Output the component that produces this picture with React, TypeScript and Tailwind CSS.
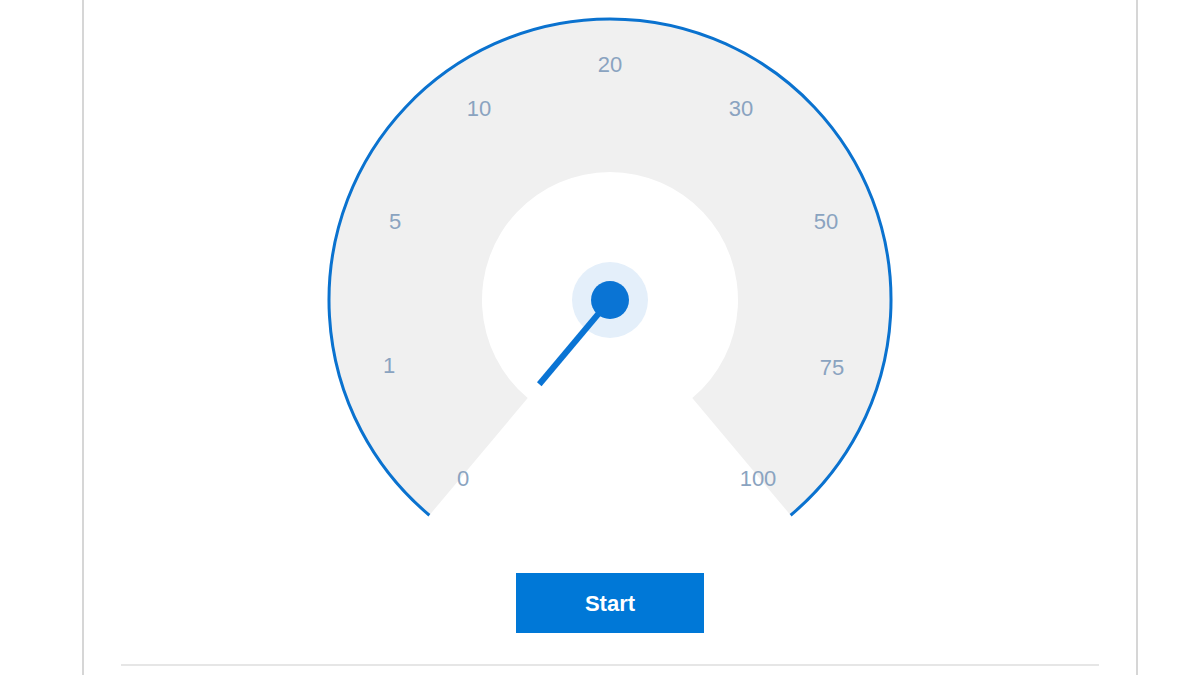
const CX = 290;
const CY = 300;
const R_OUT = 281;
const R_IN = 128;

// label centres measured on the dial (svg coords)
const LABELS: Array<{ t: string; x: number; y: number }> = [
  { t: '0', x: 143, y: 478 },
  { t: '1', x: 69, y: 365 },
  { t: '5', x: 75, y: 221 },
  { t: '10', x: 159, y: 108 },
  { t: '20', x: 290, y: 64 },
  { t: '30', x: 421, y: 108 },
  { t: '50', x: 506, y: 221 },
  { t: '75', x: 512, y: 367 },
  { t: '100', x: 438, y: 478 },
];

const pt = (deg: number, r: number) => {
  const a = (deg * Math.PI) / 180;
  return { x: CX + r * Math.sin(a), y: CY - r * Math.cos(a) };
};

const Gauge = () => {
  const o1 = pt(-140, R_OUT);
  const o2 = pt(140, R_OUT);
  const i1 = pt(-140, R_IN);
  const i2 = pt(140, R_IN);
  const band = `M ${o1.x} ${o1.y} A ${R_OUT} ${R_OUT} 0 1 1 ${o2.x} ${o2.y} L ${i2.x} ${i2.y} A ${R_IN} ${R_IN} 0 1 0 ${i1.x} ${i1.y} Z`;
  const arc = `M ${o1.x} ${o1.y} A ${R_OUT} ${R_OUT} 0 1 1 ${o2.x} ${o2.y}`;
  const tip = pt(-140, 110);

  return (
    <svg width="580" height="540" viewBox="0 0 580 540" className="block">
      <path d={band} fill="#f0f0f0" />
      <path d={arc} fill="none" stroke="#0a72cf" strokeWidth="3" />
      {LABELS.map((l) => (
        <text
          key={l.t}
          x={l.x}
          y={l.y}
          textAnchor="middle"
          dominantBaseline="central"
          fill="#8aa3c0"
          fontSize="22"
          fontFamily='"Liberation Sans", Arial, sans-serif'
        >
          {l.t}
        </text>
      ))}
      <circle cx={CX} cy={CY} r="38" fill="#e4effa" />
      <line x1={CX} y1={CY} x2={tip.x} y2={tip.y} stroke="#0a74d4" strokeWidth="6" />
      <circle cx={CX} cy={CY} r="19" fill="#0a74d4" />
    </svg>
  );
};

export default function App() {
  return (
    <div className="h-[675px] w-[1200px] overflow-hidden bg-white pl-[82px]" style={{ fontFamily: '"Liberation Sans", Arial, sans-serif' }}>
      <div className="flex h-full w-[1056px] flex-col items-center border-x-2 border-[#d6d6d6]">
        <Gauge />
        <button className="mt-[33px] flex h-[60px] w-[188px] items-center justify-center bg-[#0078d7] text-[22px] font-bold text-white">
          Start
        </button>
        <div className="mt-[31px] h-[2px] w-[978px] bg-[#e6e6e6]" />
      </div>
    </div>
  );
}
